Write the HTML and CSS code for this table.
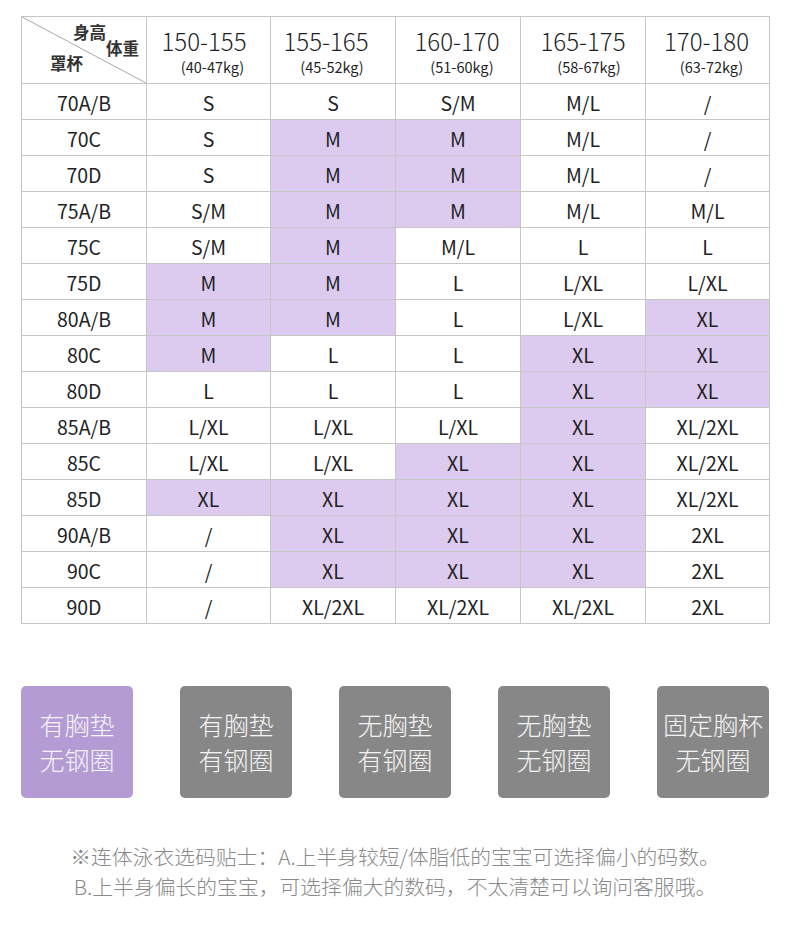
FILE: index.html
```html
<!DOCTYPE html>
<html lang="zh">
<head>
<meta charset="utf-8">
<link rel="stylesheet" href="styles.css">
</head>
<body>
<div class="page">
  <table class="size-table">
    <colgroup>
      <col class="c0"><col class="c1"><col class="c2"><col class="c3"><col class="c4"><col class="c5">
    </colgroup>
    <thead>
      <tr class="head-row">
        <th class="corner">
          <svg class="diag" viewBox="0 0 100 100" preserveAspectRatio="none"><line x1="0" y1="0" x2="100" y2="100" stroke="#a8a8a8" stroke-width="1" vector-effect="non-scaling-stroke"/></svg>
          <div class="corner-text">
            <div class="ct1">身高</div>
            <div class="ct2">体重</div>
            <div class="ct3">罩杯</div>
          </div>
        </th>
        <th class="hc hc1"><div class="h-num">150-155</div><div class="h-kg">(40-47kg)</div></th>
        <th class="hc hc2"><div class="h-num">155-165</div><div class="h-kg">(45-52kg)</div></th>
        <th class="hc hc3"><div class="h-num">160-170</div><div class="h-kg">(51-60kg)</div></th>
        <th class="hc hc4"><div class="h-num">165-175</div><div class="h-kg">(58-67kg)</div></th>
        <th class="hc hc5"><div class="h-num">170-180</div><div class="h-kg">(63-72kg)</div></th>
      </tr>
    </thead>
    <tbody>
      <tr><td>70A/B</td><td>S</td><td>S</td><td>S/M</td><td>M/L</td><td>/</td></tr>
      <tr><td>70C</td><td>S</td><td class="hl">M</td><td class="hl">M</td><td>M/L</td><td>/</td></tr>
      <tr><td>70D</td><td>S</td><td class="hl">M</td><td class="hl">M</td><td>M/L</td><td>/</td></tr>
      <tr><td>75A/B</td><td>S/M</td><td class="hl">M</td><td class="hl">M</td><td>M/L</td><td>M/L</td></tr>
      <tr><td>75C</td><td>S/M</td><td class="hl">M</td><td>M/L</td><td>L</td><td>L</td></tr>
      <tr><td>75D</td><td class="hl">M</td><td class="hl">M</td><td>L</td><td>L/XL</td><td>L/XL</td></tr>
      <tr><td>80A/B</td><td class="hl">M</td><td class="hl">M</td><td>L</td><td>L/XL</td><td class="hl">XL</td></tr>
      <tr><td>80C</td><td class="hl">M</td><td>L</td><td>L</td><td class="hl">XL</td><td class="hl">XL</td></tr>
      <tr><td>80D</td><td>L</td><td>L</td><td>L</td><td class="hl">XL</td><td class="hl">XL</td></tr>
      <tr><td>85A/B</td><td>L/XL</td><td>L/XL</td><td>L/XL</td><td class="hl">XL</td><td>XL/2XL</td></tr>
      <tr><td>85C</td><td>L/XL</td><td>L/XL</td><td class="hl">XL</td><td class="hl">XL</td><td>XL/2XL</td></tr>
      <tr><td>85D</td><td class="hl">XL</td><td class="hl">XL</td><td class="hl">XL</td><td class="hl">XL</td><td>XL/2XL</td></tr>
      <tr><td>90A/B</td><td>/</td><td class="hl">XL</td><td class="hl">XL</td><td class="hl">XL</td><td>2XL</td></tr>
      <tr><td>90C</td><td>/</td><td class="hl">XL</td><td class="hl">XL</td><td class="hl">XL</td><td>2XL</td></tr>
      <tr><td>90D</td><td>/</td><td>XL/2XL</td><td>XL/2XL</td><td>XL/2XL</td><td>2XL</td></tr>
    </tbody>
  </table>

  <div class="styles">
    <div class="style-btn active"><span>有胸垫</span><span>无钢圈</span></div>
    <div class="style-btn"><span>有胸垫</span><span>有钢圈</span></div>
    <div class="style-btn"><span>无胸垫</span><span>有钢圈</span></div>
    <div class="style-btn"><span>无胸垫</span><span>无钢圈</span></div>
    <div class="style-btn"><span>固定胸杯</span><span>无钢圈</span></div>
  </div>

  <div class="tips">
    <p>※连体泳衣选码贴士：A.上半身较短/体脂低的宝宝可选择偏小的码数。</p>
    <p>B.上半身偏长的宝宝，可选择偏大的数码，不太清楚可以询问客服哦。</p>
  </div>
</div>
</body>
</html>
```

FILE: styles.css
```css
html, body {
  margin: 0;
  padding: 0;
  background: #ffffff;
}
body {
  font-family: "Noto Sans CJK SC", "Noto Sans", sans-serif;
  color: #231f26;
}
.page {
  width: 748px;
  padding: 16px 21px 0 21px;
}
.size-table {
  width: 748px;
  border-collapse: collapse;
  table-layout: fixed;
}
.size-table col.c0 { width: 125px; }
.size-table col.c1 { width: 124px; }
.size-table col.c2 { width: 125px; }
.size-table col.c3 { width: 125px; }
.size-table col.c4 { width: 125px; }
.size-table col.c5 { width: 124px; }

.size-table th,
.size-table td {
  border: 1px solid #c6c6c6;
  text-align: center;
  padding: 0;
}
.head-row {
  height: 67px;
}
.head-row th {
  font-weight: 400;
  vertical-align: top;
}
.h-num {
  font-size: 24px;
  font-weight: 300;
  line-height: 26px;
  margin-top: 11px;
  color: #231f26;
}
.h-kg {
  font-size: 14.5px;
  font-weight: 400;
  line-height: 18px;
  margin-top: 4px;
  padding-left: 8px;
  color: #231f26;
}
.hc1 .h-num { padding-right: 9px; }
.hc2 .h-num { padding-right: 14px; }
.hc2 .h-kg { padding-left: 0; padding-right: 2px; }
.hc3 .h-num { padding-right: 2px; }
.hc4 .h-kg { padding-left: 12px; }
.hc5 .h-num { padding-right: 2px; }
.corner {
  position: relative;
}
.diag {
  position: absolute;
  left: 0;
  top: 0;
  width: 100%;
  height: 100%;
  display: block;
}
.corner-text {
  position: relative;
  padding-top: 8px;
  height: 59px;
  box-sizing: border-box;
  font-size: 16.5px;
  font-weight: 700;
  line-height: 15.5px;
  color: #333333;
}
.ct1 {
  text-align: right;
  padding-right: 40px;
}
.ct2 {
  text-align: right;
  padding-right: 7px;
}
.ct3 {
  text-align: left;
  padding-left: 28px;
}
.size-table tbody tr {
  height: 36px;
}
.size-table td {
  font-size: 19.5px;
  line-height: 22px;
  padding-top: 3px;
  color: #231f26;
}
.size-table td.hl {
  background: #dccbef;
}

.styles {
  display: flex;
  justify-content: space-between;
  margin-top: 62px;
}
.style-btn {
  width: 112px;
  height: 112px;
  box-sizing: border-box;
  padding-bottom: 1px;
  border-radius: 5px;
  background: #878787;
  color: #f4f4f4;
  display: flex;
  flex-direction: column;
  align-items: center;
  justify-content: center;
  font-size: 25px;
  font-weight: 300;
  line-height: 35px;
}
.style-btn.active {
  background: #b49bd4;
}

.tips {
  margin-top: 43px;
  text-align: center;
  color: #8a8a8a;
  font-size: 20.8px;
  font-weight: 300;
  line-height: 30px;
}
.tips p {
  margin: 0;
}
```
